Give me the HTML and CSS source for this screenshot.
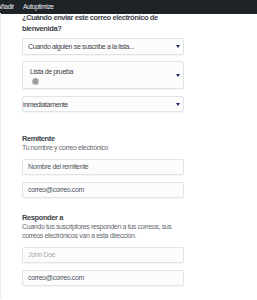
FILE: index.html
```html
<!DOCTYPE html>
<html lang="es">
<head>
	<meta charset="utf-8">
	<title>Correo de bienvenida</title>
	<meta name="viewport" content="width=device-width, initial-scale=1">
	<link rel="stylesheet" href="styles.css">
</head>
<body>

	<div id="adminbar">
		<ul>
			<li>Añadir</li>
			<li>Autoptimize</li>
		</ul>
	</div>

	<div class="panel">
		<div class="form">
			<h3 class="question">¿Cuándo enviar este correo electrónico de bienvenida?</h3>

			<div class="select">
				<span class="value">Cuando alguien se suscribe a la lista...</span>
				<span class="caret"></span>
			</div>

			<div class="select multi">
				<div class="value">
					<div>Lista de prueba</div>
					<span class="count">0</span>
				</div>
				<span class="caret"></span>
			</div>

			<div class="select flush">
				<span class="value">inmediatamente</span>
				<span class="caret"></span>
			</div>

			<div class="field sender">
				<h4>Remitente</h4>
				<p>Tu nombre y correo electrónico</p>
				<div class="input">Nombre del remitente</div>
				<div class="input">correo@correo.com</div>
			</div>

			<div class="field reply">
				<h4>Responder a</h4>
				<p>Cuando tus suscriptores responden a tus correos, sus correos electrónicos van a esta dirección.</p>
				<div class="input placeholder">John Doe</div>
				<div class="input">correo@correo.com</div>
			</div>
		</div>
	</div>

</body>
</html>
```

FILE: styles.css
```css
html,
body {
	padding: 0;
	margin: 0;
	overflow: hidden;
}

:root {
	--text: #3c434a;
	--muted: #646970;
	--border: 1px solid #e1e3e6;
	--field-bg: #fcfcfd;
	--caret: #1b2a63;
}

body {
	background: #fff;
	color: var(--text);
	font: 7px "Liberation Sans", Arial, sans-serif;
	letter-spacing: -0.35px;
}

#adminbar {
	height: 14px;
	background: #1d2327;
	color: #f0f0f1;
	font-size: 6.5px;
	letter-spacing: -0.3px;
}
#adminbar ul { margin: 0 0 0 -3px; padding: 0; list-style: none; display: flex; gap: 9px; line-height: 14px; }

.panel {
	border-left: 1px solid #ececec;
	min-height: 286px;
}

.form {
	width: 162px;
	padding-left: 21px;
}

.question {
	margin: -1px 0 4px;
	font-size: 7.5px;
	font-weight: 700;
	letter-spacing: -0.4px;
	line-height: 10.5px;
}

.select,
.input {
	box-sizing: border-box;
	border: var(--border);
	border-radius: 2px;
	background: var(--field-bg);
	box-shadow: 0 1px 1px #0000000a;
}

.select {
	display: flex;
	align-items: center;
	justify-content: space-between;
	height: 17px;
	padding: 0 3px 0 5px;
	margin-bottom: 6px;
}
.select.multi { height: 28px; padding-left: 7px; margin-bottom: 7px; }
.select.flush { height: 16px; padding-left: 0; margin-bottom: 0; }
.select.multi .value { align-self: flex-start; padding-top: 6px; line-height: 8px; }

.count {
	display: block;
	width: 7px;
	height: 7px;
	margin: 2px 0 0 2px;
	border-radius: 50%;
	background: #b2b2b2;
	color: #505050;
	font-size: 5px;
	letter-spacing: 0;
	line-height: 7px;
	text-align: center;
}

.caret {
	width: 0;
	height: 0;
	border-left: 2px solid transparent;
	border-right: 2px solid transparent;
	border-top: 3px solid var(--caret);
}

.field h4 { margin: 0; font-size: 7.5px; font-weight: 700; letter-spacing: -0.4px; line-height: 8px; }
.field p { margin: 0; color: var(--muted); line-height: 9px; }
.sender { padding-top: 23px; }
.reply { padding-top: 16px; }

.input {
	height: 16px;
	line-height: 14px;
	padding: 0 5px;
	margin-top: 7px;
	color: #50575e;
}
.input.placeholder { color: #a7aaad; }
```
